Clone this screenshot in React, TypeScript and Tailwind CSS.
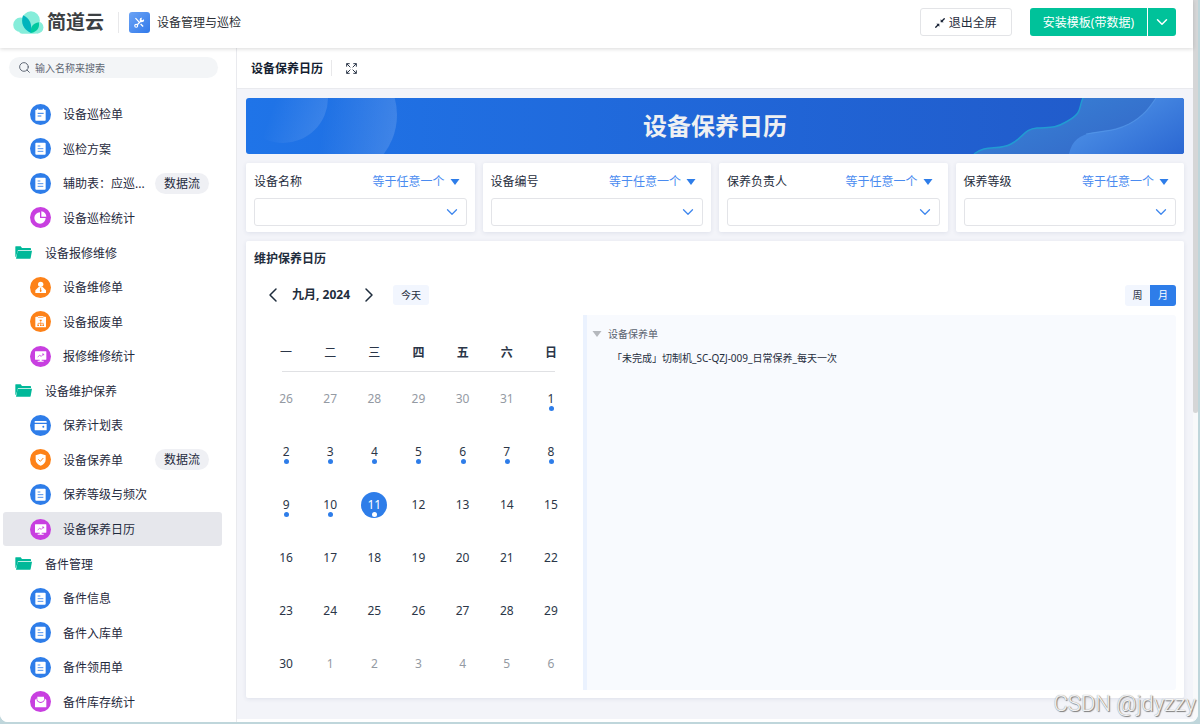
import { useState } from "react";
import type { ReactNode } from "react";
import clsx from "clsx";
import { ChevronDown, ChevronLeft, ChevronRight, Search } from "lucide-react";

type IconKind =
  | "notebook"
  | "doc"
  | "pie"
  | "person"
  | "clipboard"
  | "monitor"
  | "wallet"
  | "shield"
  | "mail";

type MenuItem = { label: string; icon?: IconKind; tag?: string };

const BLUE = "#2e7de9";
const ORANGE = "#fd8219";
const PURPLE = "#c83fe0";

// items without an icon are folders
const menu: MenuItem[] = [
  { label: "设备巡检单", icon: "notebook" },
  { label: "巡检方案", icon: "doc" },
  { label: "辅助表：应巡...", icon: "doc", tag: "数据流" },
  { label: "设备巡检统计", icon: "pie" },
  { label: "设备报修维修" },
  { label: "设备维修单", icon: "person" },
  { label: "设备报废单", icon: "clipboard" },
  { label: "报修维修统计", icon: "monitor" },
  { label: "设备维护保养" },
  { label: "保养计划表", icon: "wallet" },
  { label: "设备保养单", icon: "shield", tag: "数据流" },
  { label: "保养等级与频次", icon: "doc" },
  { label: "设备保养日历", icon: "monitor" },
  { label: "备件管理" },
  { label: "备件信息", icon: "doc" },
  { label: "备件入库单", icon: "doc" },
  { label: "备件领用单", icon: "doc" },
  { label: "备件库存统计", icon: "mail" },
];

const glyphs: Record<IconKind, { color: string; art: ReactNode }> = {
  notebook: {
    color: BLUE,
    art: (
      <>
        <path d="M18 17h3v-3h4v3h13v-3h4v3h3a2 2 0 0 1 2 2v29a2 2 0 0 1-2 2H18a2 2 0 0 1-2-2V19a2 2 0 0 1 2-2z" fill="#fff" />
        <path d="M23 28h18M23 36h11" stroke={BLUE} strokeWidth="3" />
      </>
    ),
  },
  doc: {
    color: BLUE,
    art: (
      <>
        <rect x="16" y="14" width="31" height="36" rx="3" fill="#fff" />
        <path d="M23 24h8M23 32h17M23 40h17" stroke={BLUE} strokeWidth="2.5" />
      </>
    ),
  },
  pie: {
    color: PURPLE,
    art: (
      <>
        <path d="M30 16v17h17A17 17 0 1 1 30 16z" fill="#fff" />
        <path d="M34 13a16 16 0 0 1 15 16H34z" fill="#fff" />
      </>
    ),
  },
  person: {
    color: ORANGE,
    art: (
      <>
        <circle cx="32" cy="22" r="8" fill="#fff" />
        <path d="M26 30h12l10 10v8H16v-8z" fill="#fff" />
        <path d="M30 32h4l-1 4 2 6-3 4-3-4 2-6z" fill={ORANGE} />
      </>
    ),
  },
  clipboard: {
    color: ORANGE,
    art: (
      <>
        <path d="M18 17h6v-2h16v2h6a2 2 0 0 1 2 2v28a2 2 0 0 1-2 2H18a2 2 0 0 1-2-2V19a2 2 0 0 1 2-2z" fill="#fff" />
        <path d="M24 19h16M32 27v8M24 42v-5h16v5M32 35v7" stroke={ORANGE} strokeWidth="2" fill="none" />
        <path d="M29 26h6v4h-6zM22 41h5v4h-5zM30 41h5v4h-5zM37 41h5v4h-5z" fill={ORANGE} />
      </>
    ),
  },
  monitor: {
    color: PURPLE,
    art: (
      <>
        <path d="M16 16h32a1 1 0 0 1 1 1v23a1 1 0 0 1-1 1H35v3h6v3H23v-3h6v-3H16a1 1 0 0 1-1-1V17a1 1 0 0 1 1-1z" fill="#fff" />
        <path d="M23 33l6-5 5 3 7-7M36 24h5v4" stroke={PURPLE} strokeWidth="2.4" fill="none" />
      </>
    ),
  },
  wallet: {
    color: BLUE,
    art: (
      <>
        <path d="M16 18h32a2 2 0 0 1 2 2v3H14v-3a2 2 0 0 1 2-2z" fill="#fff" />
        <path d="M14 27h36v17a2 2 0 0 1-2 2H16a2 2 0 0 1-2-2z" fill="#fff" />
        <circle cx="40" cy="35" r="3" fill={BLUE} />
      </>
    ),
  },
  shield: {
    color: ORANGE,
    art: (
      <>
        <path d="M32 14l15 5v13c0 8-6 14-15 18-9-4-15-10-15-18V19z" fill="#fff" />
        <path d="M25 31l6 6 9-10" stroke={ORANGE} strokeWidth="3" fill="none" />
      </>
    ),
  },
  mail: {
    color: PURPLE,
    art: (
      <>
        <path d="M15 27l5-5v6c3 6 8 8 12 8s9-2 12-8v-6l5 5v20a2 2 0 0 1-2 2H17a2 2 0 0 1-2-2z" fill="#fff" />
        <path d="M22 17h20v10c-2 4-6 6-10 6s-8-2-10-6z" fill="#fff" />
      </>
    ),
  },
};

function FormIcon({ kind }: { kind: IconKind }) {
  const { color, art } = glyphs[kind];
  return (
    <svg viewBox="0 0 63 63" className="size-[21px] shrink-0" aria-hidden="true">
      <circle cx="31.5" cy="31.5" r="31.5" fill={color} />
      {art}
    </svg>
  );
}

function FolderIcon() {
  return (
    <svg viewBox="0 0 51 39" className="h-[13px] w-[17px] shrink-0" aria-hidden="true">
      <path d="M2 1h15l4 5h25a2 2 0 0 1 2 2v4H9L3 32H1V2z" fill="#00b899" />
      <path d="M8 14h43l-4 22a2 2 0 0 1-2 2H3z" fill="#00b899" />
    </svg>
  );
}

function Logo() {
  return (
    <a href="#" className="flex items-center gap-[3px] text-[#3c4043]">
      <svg viewBox="0 0 93 70" className="h-[23px] w-[31px]" aria-hidden="true">
        <g fill="#86edda">
          <circle cx="22" cy="42" r="22" />
          <circle cx="54" cy="28" r="27" />
          <circle cx="73" cy="50" r="19" />
          <rect x="18" y="40" width="56" height="29" rx="10" />
        </g>
        <path d="M54 67C30 56 22 36 30 13c20 9 28 26 24 54z" fill="#00b4bd" />
        <path d="M54 67c-3-18 6-30 24-33 3 16-5 29-24 33z" fill="#00c99f" />
      </svg>
      <span className="text-[19px] leading-6 font-bold">简道云</span>
    </a>
  );
}

function TopBar() {
  return (
    <header className="relative z-10 flex h-12 items-center bg-white pr-[17px] pb-1 pl-[13px] shadow-[0_1px_4px_rgba(0,0,0,0.15)]">
      <Logo />
      <div className="mr-[10px] ml-[14px] h-[21px] w-px bg-[#e8e8ea]" />
      <span className="flex size-[21px] items-center justify-center rounded-[3px] bg-linear-to-br from-[#6ba3f5] to-[#3079ea]">
        <svg viewBox="0 0 30 30" className="size-[11px]" fill="none" stroke="#fff" aria-hidden="true">
          <path d="M4 3l12 13M18 19l7 7" strokeWidth="3.5" />
          <path d="M9 21L20 10" strokeWidth="3.5" />
          <path d="M27 6a6 6 0 1 1-5-4l-2 5 3 2z" fill="#fff" stroke="none" />
          <circle cx="6" cy="24" r="4" strokeWidth="3" />
        </svg>
      </span>
      <h1 className="ml-[7px] pt-0.5 text-xs text-[#2b2f36]">设备管理与巡检</h1>
      <div className="ml-auto flex items-center">
        <button className="flex h-7 items-center gap-1 rounded-[3px] border border-[#e3e4e7] px-[14px] pt-0.5 text-xs text-[#1f2d3d]">
          <svg viewBox="0 0 30 30" className="size-[10px]" fill="none" stroke="#141e31" strokeWidth="4" aria-hidden="true">
            <path d="M29 1l-8 8M1 29l8-8" />
            <path d="M17 4v9h9zM13 26v-9H4z" fill="#141e31" stroke="none" />
          </svg>
          退出全屏
        </button>
        <button className="ml-[18px] h-7 rounded-l-[3px] bg-[#00c29a] px-[13px] pt-0.5 text-xs text-white">
          安装模板(带数据)
        </button>
        <button aria-label="更多安装选项" className="ml-px flex h-7 w-7 items-center justify-center rounded-r-[3px] bg-[#00c29a] text-white">
          <ChevronDown size={18} />
        </button>
      </div>
    </header>
  );
}

function Sidebar() {
  const [active, setActive] = useState("设备保养日历");

  return (
    <aside className="flex w-[237px] shrink-0 flex-col border-r border-[#e9eaee] bg-white pt-[9px] pb-[3px]">
      <label className="mr-[18px] ml-[9px] flex h-[21px] items-center gap-1 rounded-full bg-[#f3f5f7] px-[9px] text-[#5e6673]">
        <Search size={13} strokeWidth={1.8} />
        <input
          type="text"
          aria-label="搜索"
          placeholder="输入名称来搜索"
          className="min-w-0 flex-1 bg-transparent text-[10px] leading-4 outline-none placeholder:text-[#5e6673]"
        />
      </label>
      <nav className="mt-[19px] flex flex-1 flex-col pr-[14px] pl-[3px]">
        {menu.map((item) => (
          <a
            key={item.label}
            href="#"
            onClick={() => setActive(item.label)}
            className={clsx(
              "flex min-h-8 flex-1 items-center rounded-[3px] pr-[13px] text-xs text-[#1f2a3d]",
              item.icon ? "pl-[27px]" : "pl-3",
              item.label === active && "bg-[#e6e7ec]"
            )}
          >
            {item.icon ? <FormIcon kind={item.icon} /> : <FolderIcon />}
            <span className={clsx("pt-0.5 whitespace-nowrap", item.icon ? "ml-3" : "ml-[13px]")}>{item.label}</span>
            {item.tag && (
              <span className="ml-auto shrink-0 rounded-full bg-[#eff0f4] px-[9px] leading-[21px]">{item.tag}</span>
            )}
          </a>
        ))}
      </nav>
    </aside>
  );
}

function Banner() {
  return (
    <div className="relative flex h-14 items-center justify-center overflow-hidden rounded-[3px] bg-linear-to-r from-[#1f74e8] to-[#2159c8]">
      <svg viewBox="0 0 160 56" className="absolute top-0 left-0 h-14 w-40" aria-hidden="true">
        <defs>
          <linearGradient id="disc-a" x1="0.35" y1="0.7" x2="0.9" y2="0.9">
            <stop offset="0" stopColor="#fff" stopOpacity="0" />
            <stop offset="1" stopColor="#fff" stopOpacity="0.12" />
          </linearGradient>
          <linearGradient id="disc-b" x1="0.45" y1="0.4" x2="1" y2="0.5">
            <stop offset="0" stopColor="#fff" stopOpacity="0" />
            <stop offset="1" stopColor="#fff" stopOpacity="0.14" />
          </linearGradient>
        </defs>
        <circle cx="37" cy="0" r="45" fill="url(#disc-a)" />
        <circle cx="87" cy="17" r="64" fill="url(#disc-b)" />
      </svg>
      <svg viewBox="0 0 218 56" className="absolute top-0 right-0 h-14 w-[218px]" fill="none" aria-hidden="true">
        <defs>
          <linearGradient id="wave-a" x1="0" y1="0" x2="1" y2="0.6">
            <stop offset="0" stopColor="#3a86d8" />
            <stop offset="1" stopColor="#3368c8" />
          </linearGradient>
          <linearGradient id="wave-b" x1="0" y1="0.2" x2="1" y2="1">
            <stop offset="0.2" stopColor="#4a8de4" />
            <stop offset="1" stopColor="#2b67d2" />
          </linearGradient>
        </defs>
        <path d="M8 56C20 46 32 53 45 46C57 40 58 31 71 30C83 29 88 31 100 24C118 14 112 10 117 0H218V56z" fill="url(#wave-a)" />
        <path d="M8 56C20 46 32 53 45 46C57 40 58 31 71 30C83 29 88 31 100 24C118 14 112 10 117 0" stroke="#219bd2" strokeWidth="1.5" />
        <path d="M103 56C106 42 114 37 127 34.5C143 32 149 33 163 26C178 18 184 9 190 0H218V56z" fill="url(#wave-b)" />
        <path d="M120 36C143 32 149 33 163 26C178 18 184 9 190 0" stroke="#5599ea" strokeWidth="1.2" opacity="0.7" />
      </svg>
      <h2 className="relative text-2xl font-bold text-[#eef0f2]">设备保养日历</h2>
    </div>
  );
}

function Caret({ className }: { className: string }) {
  return (
    <svg viewBox="0 0 10 6" className={clsx("h-[6px] w-[10px]", className)} fill="currentColor" aria-hidden="true">
      <path d="M0.5 0h9L5 6z" />
    </svg>
  );
}

function FilterCard({ label }: { label: string }) {
  return (
    <div className="rounded-[2px] bg-white px-2 pt-[10px] pb-[6px] shadow-[0_1px_4px_rgba(40,60,110,0.1)]">
      <div className="flex h-[18px] items-center justify-between text-xs">
        <label htmlFor={label} className="text-[#1f2d3d]">
          {label}
        </label>
        <button className="mr-[7px] flex items-center gap-[5px] text-[#4a8bf0]">
          等于任意一个
          <Caret className="text-[#2e7de9]" />
        </button>
      </div>
      <div className="relative mt-[7px]">
        <select id={label} className="block h-7 w-full appearance-none rounded-[3px] border border-[#e3e4e8] bg-white px-2 text-xs outline-none">
          <option value=""></option>
        </select>
        <ChevronDown size={18} strokeWidth={1.7} className="pointer-events-none absolute top-[5px] right-[6px] text-[#3f87ee]" />
      </div>
    </div>
  );
}

const weekdays = ["一", "二", "三", "四", "五", "六", "日"];

// 42 cells starting on Monday 26 August 2024
const cells = Array.from({ length: 42 }, (_, i) => new Date(2024, 7, 26 + i));
const weeks = Array.from({ length: 6 }, (_, i) => cells.slice(i * 7, i * 7 + 7));

function MonthGrid() {
  const [selected, setSelected] = useState(11);

  return (
    <table className="w-full table-fixed border-collapse text-center text-xs text-[#2b3648]">
      <thead>
        <tr className="h-14">
          {weekdays.map((d, i) => (
            <th key={d} scope="col" className={clsx("pt-5", i < 3 ? "font-normal" : "font-bold")}>
              {d}
            </th>
          ))}
        </tr>
        <tr aria-hidden="true">
          <td colSpan={7} className="px-[18px]">
            <div className="h-px bg-[#e0e1e4]" />
          </td>
        </tr>
      </thead>
      <tbody>
        {weeks.map((week, i) => (
          <tr key={i} className="h-[53px]">
            {week.map((date) => {
              const day = date.getDate();
              const current = date.getMonth() === 8;
              const isSelected = current && day === selected;
              return (
                <td key={date.toISOString()} className="p-0">
                  <button
                    onClick={() => current && setSelected(day)}
                    className={clsx(
                      "relative mx-auto flex size-[26px] items-center justify-center rounded-full",
                      isSelected && "bg-[#2e7de9] text-white",
                      !current && "text-[#949aa3]"
                    )}
                  >
                    {day}
                    {current && day <= 11 && (
                      <span
                        className={clsx(
                          "absolute bottom-px left-[11px] size-[5px] rounded-full",
                          isSelected ? "bg-white" : "bg-[#2e7de9]"
                        )}
                      />
                    )}
                  </button>
                </td>
              );
            })}
          </tr>
        ))}
      </tbody>
    </table>
  );
}

function CalendarCard() {
  return (
    <section className="rounded-[2px] bg-white px-2 pt-[9px] pb-2 shadow-[0_1px_4px_rgba(40,60,110,0.1)]">
      <h3 className="text-xs leading-[18px] font-bold text-[#1f2d3d]">维护保养日历</h3>
      <div className="mt-4 flex h-[22px] items-center pl-[7px] text-[#1f2d3d]">
        <button aria-label="上个月">
          <ChevronLeft size={24} strokeWidth={1.5} />
        </button>
        <span className="mx-[7px] text-xs font-bold">九月, 2024</span>
        <button aria-label="下个月">
          <ChevronRight size={24} strokeWidth={1.5} />
        </button>
        <button className="ml-3 h-5 rounded-[3px] bg-[#f2f6fe] px-2 text-[10px]">今天</button>
        <div className="ml-auto flex text-[10px]">
          <button className="h-[21px] w-[25px] rounded-l-[3px] bg-[#f2f6fe]">周</button>
          <button className="h-[21px] w-[26px] rounded-r-[3px] bg-[#2e7de9] text-white">月</button>
        </div>
      </div>
      <div className="mt-[9px] flex">
        <div className="w-[329px] shrink-0 px-[10px]">
          <MonthGrid />
        </div>
        <div className="flex-1 rounded-r-[3px] border-l-4 border-[#ebf2fe] bg-[#f8fafe] px-[5px] pt-[11px] text-[10px]">
          <button className="flex items-center gap-[6px] leading-4 text-[#5a6270]">
            <Caret className="text-[#b5b8bd]" />
            设备保养单
          </button>
          <a href="#" className="mt-2 block pl-5 leading-4 text-[#1f2d3d]">
            「未完成」切制机_SC-QZJ-009_日常保养_每天一次
          </a>
        </div>
      </div>
    </section>
  );
}

export default function App() {
  return (
    <div className="relative flex min-h-screen bg-[#bfd6db] pr-[2px] pb-[2px] font-['Noto_Sans','Noto_Sans_CJK_SC',sans-serif]">
      <div className="flex flex-1 overflow-hidden rounded-b-lg bg-white">
        <div className="flex min-w-0 flex-1 flex-col">
          <TopBar />
          <div className="flex flex-1">
            <Sidebar />
            <main className="mb-[3px] min-w-0 flex-1 bg-[#f3f4f9]">
              <div className="flex h-[41px] items-center border-b border-[#e9eaee] bg-white pl-[14px]">
                <h2 className="pt-0.5 text-xs font-bold text-[#141e31]">设备保养日历</h2>
                <div className="mr-[14px] ml-2 h-4 w-px bg-[#e8e8ea]" />
                <button aria-label="全屏">
                  <svg viewBox="0 0 33 33" className="size-[11px]" fill="none" stroke="#2b3648" strokeWidth="3" aria-hidden="true">
                    <path d="M2 11V2h9M22 2h9v9M31 22v9h-9M11 31H2v-9M2 2l11 11M31 2L20 13M31 31L20 20M2 31l11-11" />
                  </svg>
                </button>
              </div>
              <div className="flex flex-col gap-[9px] px-[9px] pt-[9px]">
                <Banner />
                <div className="grid grid-cols-4 gap-2">
                  <FilterCard label="设备名称" />
                  <FilterCard label="设备编号" />
                  <FilterCard label="保养负责人" />
                  <FilterCard label="保养等级" />
                </div>
                <CalendarCard />
              </div>
            </main>
          </div>
        </div>
        <div className="flex w-[5px] flex-col bg-[#f8f9fa]" aria-hidden="true">
          <div className="flex-[4] rounded-b-full bg-[#d5d6d7]" />
          <div className="flex-[3]" />
        </div>
      </div>
      <span className="pointer-events-none absolute right-1 bottom-1 z-20 font-['Roboto',sans-serif] text-[22px] leading-8 font-light text-[#f2f2f2] [text-shadow:1px_1px_1px_#777,0_0_1px_#888]">
        CSDN @jdyzzy
      </span>
    </div>
  );
}
